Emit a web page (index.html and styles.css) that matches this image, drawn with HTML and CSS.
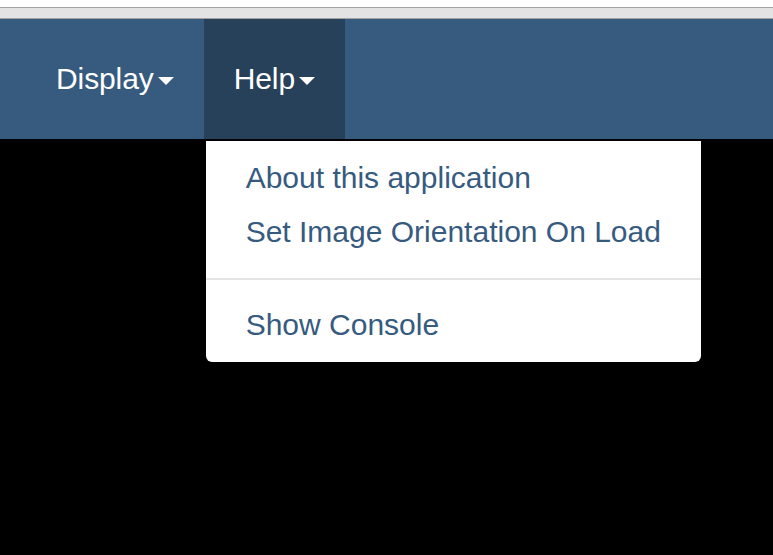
FILE: index.html
```html
<!DOCTYPE html>
<html>
<head>
<meta charset="utf-8">
<link rel="stylesheet" href="styles.css">
</head>
<body>
<div class="chrome"><div class="chrome-bar"></div></div>
<nav class="navbar">
  <ul class="nav">
    <li class="nav-item"><a class="nav-link">Display<span class="caret"></span></a></li>
    <li class="nav-item open">
      <a class="nav-link">Help<span class="caret"></span></a>
      <ul class="dropdown-menu">
        <li><a class="menu-link">About this application</a></li>
        <li><a class="menu-link">Set Image Orientation On Load</a></li>
        <li class="divider"></li>
        <li><a class="menu-link">Show Console</a></li>
      </ul>
    </li>
  </ul>
</nav>
<main class="stage"></main>
</body>
</html>
```
FILE: styles.css
```css
html, body {
  margin: 0;
  padding: 0;
  height: 100%;
}
body {
  background: #000;
  font-family: "Liberation Sans", Arial, sans-serif;
  font-size: 30px;
  line-height: 1.42857;
  overflow: hidden;
}
.chrome {
  background: #fff;
  padding-top: 7px;
}
.chrome-bar {
  height: 10px;
  background: #e3e3e3;
  border-top: 1px solid #a3a3a3;
  border-bottom: 1px solid #a0a0a0;
}
.navbar {
  background: #375a7f;
  height: 120px;
}
.nav {
  list-style: none;
  margin: 0;
  padding: 0 0 0 26px;
  display: flex;
}
.nav-item {
  position: relative;
}
.nav-link {
  display: block;
  padding: 39px 30px;
  line-height: 42px;
  color: #fff;
  cursor: pointer;
  letter-spacing: -0.1px;
}
.open > .nav-link {
  background: #28415b;
}
.caret {
  display: inline-block;
  width: 0;
  height: 0;
  margin-left: 4px;
  vertical-align: middle;
  border-top: 8px solid #fff;
  border-left: 8px solid transparent;
  border-right: 8px solid transparent;
}
.dropdown-menu {
  position: absolute;
  top: 100%;
  left: 0;
  margin: 0;
  padding: 10px 0;
  list-style: none;
  background: #fff;
  border: 2px solid rgba(0, 0, 0, 0.15);
  border-radius: 0 0 8px 8px;
  background-clip: padding-box;
  white-space: nowrap;
  width: 495px;
  box-sizing: content-box;
}
.menu-link {
  display: block;
  padding: 6px 40px;
  line-height: 42px;
  color: #375a7f;
  cursor: pointer;
}
.divider {
  height: 2px;
  margin: 19px 0 18px;
  background: #e5e5e5;
}
```
